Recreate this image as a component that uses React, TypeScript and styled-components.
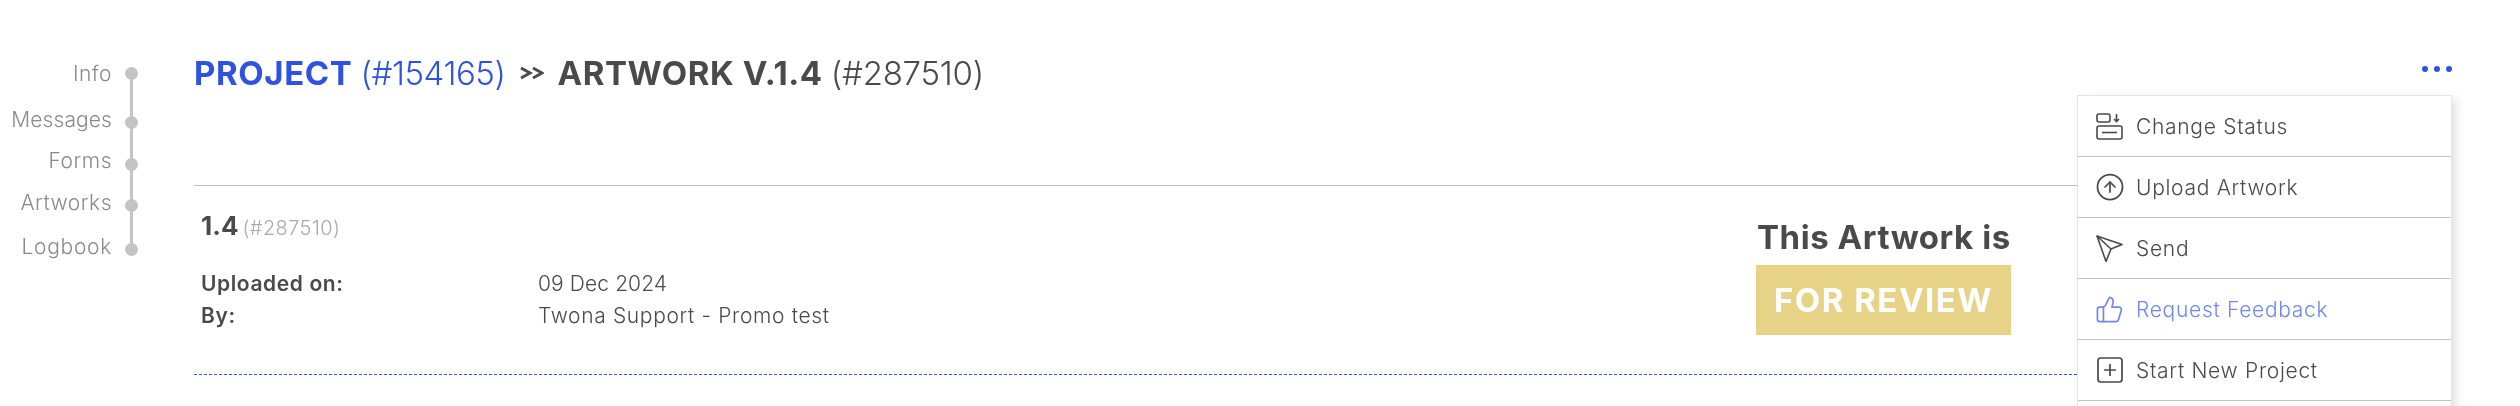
import React from "react";
import styled, { createGlobalStyle } from "styled-components";
import { CircleArrowUp, SquarePlus, ThumbsUp } from "lucide-react";

const GlobalStyle = createGlobalStyle`
  html, body {
    margin: 0;
    padding: 0;
    background: #fff;
    overflow: hidden;
  }
  body {
    font-family: "Inter", "Noto Sans", sans-serif;
    color: #4a4a4a;
  }
`;

const Page = styled.div`
  display: flex;
  width: 2520px;
  height: 406px;
  overflow: hidden;
  will-change: transform;
`;

const SideNav = styled.nav`
  position: relative;
  width: 194px;
  flex-shrink: 0;
  padding-top: 53px;
  box-sizing: border-box;
`;

const NavLine = styled.div`
  position: absolute;
  left: 130px;
  top: 73px;
  width: 3px;
  height: 176px;
  background: #c4c4c4;
`;

const NavItem = styled.div<{ $h: number }>`
  position: relative;
  height: ${(p) => p.$h}px;
  width: 138px;
  display: flex;
  justify-content: space-between;
  align-items: flex-start;
`;

const NavLabel = styled.span<{ $track: number }>`
  width: 112px;
  text-align: right;
  font-size: 21px;
  line-height: 42px;
  font-weight: 300;
  color: #8a8a8a;
  letter-spacing: ${(p) => p.$track}px;
`;

const NavDot = styled.span<{ $top: number }>`
  width: 13px;
  height: 13px;
  margin-top: ${(p) => p.$top}px;
  border-radius: 50%;
  background: #c4c4c4;
`;

const Main = styled.main`
  position: relative;
  flex: 1;
  padding-right: 443px;
`;

const Title = styled.h1`
  margin: 0;
  height: 186px;
  padding-top: 52px;
  box-sizing: border-box;
  border-bottom: 1px solid #bdbdbd;
  display: flex;
  align-items: flex-start;
  font-size: 33px;
  line-height: 42px;
  font-weight: 400;
  white-space: nowrap;
`;

const TitlePart = styled.span<{ $blue?: boolean; $gap?: number; $track: number }>`
  color: ${(p) => (p.$blue ? "#2f52e0" : "#4a4a4a")};
  margin-left: ${(p) => p.$gap ?? 0}px;
  letter-spacing: ${(p) => p.$track}px;
  font-weight: 300;
  b {
    font-weight: 700;
    letter-spacing: 0.6px;
    margin-right: 8px;
  }
`;

const Chevrons = styled.span`
  margin-left: 15px;
  width: 24px;
  display: flex;
  height: 42px;
  align-items: center;
  color: #4a4a4a;
`;

const Version = styled.section`
  height: 189px;
  box-sizing: border-box;
  padding: 21px 0 0 7px;
  display: flex;
  justify-content: space-between;
  background: repeating-linear-gradient(90deg, #2f52e0 0 3px, transparent 3px 5px) left bottom / 100% 1px no-repeat;
`;

const VersionInfo = styled.div`
  display: flex;
  flex-direction: column;
`;

const VersionTitle = styled.div`
  height: 61px;
  font-size: 26px;
  line-height: 38px;
  font-weight: 700;
  span {
    font-size: 20px;
    font-weight: 300;
    color: #aaa;
    margin-left: 4px;
    letter-spacing: 0.4px;
  }
`;

const MetaRow = styled.div`
  display: flex;
  font-size: 21px;
  line-height: 32px;
`;

const MetaKey = styled.span`
  width: 337px;
  font-weight: 600;
  letter-spacing: 0.6px;
`;

const MetaValue = styled.span<{ $track: number }>`
  font-weight: 300;
  letter-spacing: ${(p) => p.$track}px;
`;

const StatusBox = styled.div`
  margin-right: 66px;
  width: 255px;
  display: flex;
  flex-direction: column;
  gap: 9px;
  padding-top: 11px;
`;

const StatusLabel = styled.div`
  font-size: 33px;
  line-height: 38px;
  font-weight: 700;
  white-space: nowrap;
  padding-left: 1px;
  letter-spacing: 0.55px;
`;

const StatusBadge = styled.div`
  height: 70px;
  background: #e6d387;
  color: #fff;
  font-size: 33px;
  font-weight: 700;
  display: flex;
  align-items: center;
  justify-content: center;
  white-space: nowrap;
  letter-spacing: 1.5px;
`;

const DotsButton = styled.div`
  position: absolute;
  top: 66px;
  left: 2228px;
  display: flex;
  gap: 6px;
  span {
    width: 6px;
    height: 6px;
    border-radius: 50%;
    background: #2f52e0;
  }
`;

const Menu = styled.div`
  position: absolute;
  top: 95px;
  left: 1883px;
  width: 375px;
  height: 340px;
  box-sizing: border-box;
  background: #fff;
  border: 1px solid #e4e4e4;
  box-shadow: 4px 4px 10px rgba(0, 0, 0, 0.12);
  display: flex;
  flex-direction: column;
`;

const MenuItem = styled.div<{ $active?: boolean }>`
  height: 61px;
  box-sizing: border-box;
  border-bottom: 1px solid #c4c4c4;
  padding-left: 18px;
  display: flex;
  align-items: center;
  gap: 13px;
  font-size: 21px;
  font-weight: 300;
  letter-spacing: 0.7px;
  color: ${(p) => (p.$active ? "#7088ec" : "#4a4a4a")};
  svg {
    flex-shrink: 0;
  }
`;

const StatusIcon = () => (
  <svg width="27" height="27" viewBox="0 0 27 27" fill="none" stroke="currentColor" strokeWidth="1.6">
    <rect x="1" y="1" width="13" height="8" rx="2" />
    <rect x="1" y="13" width="25" height="13" rx="2" />
    <path d="M6 19.5h15" />
    <path d="M20.5 1v7M18 6l2.5 2.5L23 6" />
  </svg>
);

const SendIcon = () => (
  <svg width="27" height="27" viewBox="0 0 27 27" fill="none" stroke="currentColor" strokeWidth="1.6" strokeLinejoin="round">
    <path d="M1 1l25 8.5-11 4.5-5 12.5z" />
    <path d="M1 1l14 13" />
  </svg>
);

const menuItems = [
  { label: "Change Status", icon: <StatusIcon /> },
  { label: "Upload Artwork", icon: <CircleArrowUp size={30} strokeWidth={1.4} style={{ margin: "0 -1.5px" }} /> },
  { label: "Send", icon: <SendIcon /> },
  { label: "Request Feedback", icon: <ThumbsUp size={29} strokeWidth={1.4} style={{ margin: "0 -1px" }} />, active: true },
  { label: "Start New Project", icon: <SquarePlus size={32} strokeWidth={1.3} style={{ margin: "0 -2.5px" }} /> },
];

const navItems = [
  { label: "Info", h: 46, dot: 13.5, track: 0.5 },
  { label: "Messages", h: 41, dot: 16.5, track: 0.1 },
  { label: "Forms", h: 42, dot: 17.5, track: 0.5 },
  { label: "Artworks", h: 44, dot: 16.5, track: 0.5 },
  { label: "Logbook", h: 42, dot: 16.5, track: 0.7 },
];

export default function App() {
  return (
    <>
      <GlobalStyle />
      <Page>
        <SideNav>
          <NavLine />
          {navItems.map((item) => (
            <NavItem key={item.label} $h={item.h}>
              <NavLabel $track={item.track}>{item.label}</NavLabel>
              <NavDot $top={item.dot} />
            </NavItem>
          ))}
        </SideNav>
        <Main>
          <Title>
            <TitlePart $blue $track={-0.45}>
              <b>PROJECT</b>(#154165)
            </TitlePart>
            <Chevrons>
              <svg width="24" height="14" viewBox="0 0 24 14" fill="none" stroke="currentColor" strokeWidth="3">
                <path d="M1 2l9 5-9 5M13 2l9 5-9 5" />
              </svg>
            </Chevrons>
            <TitlePart $gap={13} $track={-0.25}>
              <b>ARTWORK V.1.4</b>(#287510)
            </TitlePart>
          </Title>
          <Version>
            <VersionInfo>
              <VersionTitle>
                1.4<span>(#287510)</span>
              </VersionTitle>
              <MetaRow>
                <MetaKey>Uploaded on:</MetaKey>
                <MetaValue $track={0.1}>09 Dec 2024</MetaValue>
              </MetaRow>
              <MetaRow>
                <MetaKey>By:</MetaKey>
                <MetaValue $track={0.65}>Twona Support - Promo test</MetaValue>
              </MetaRow>
            </VersionInfo>
            <StatusBox>
              <StatusLabel>This Artwork is</StatusLabel>
              <StatusBadge>FOR REVIEW</StatusBadge>
            </StatusBox>
          </Version>
          <DotsButton>
            <span />
            <span />
            <span />
          </DotsButton>
          <Menu>
            {menuItems.map((item) => (
              <MenuItem key={item.label} $active={item.active}>
                {item.icon}
                {item.label}
              </MenuItem>
            ))}
          </Menu>
        </Main>
      </Page>
    </>
  );
}
